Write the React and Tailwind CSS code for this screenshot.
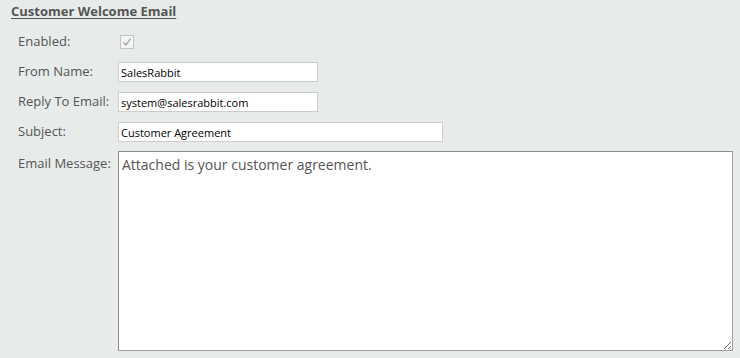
export default function App() {
  const labelCls = "w-[100px] shrink-0 text-[13px] text-[#555]";
  const inputCls =
    "h-[20px] border border-[#ccc] bg-white px-[2px] text-[11px] text-black outline-none";

  return (
    <div
      className="w-[740px] h-[358px] bg-[#e7ecea] overflow-hidden"
      style={{ fontFamily: '"Open Sans", sans-serif' }}
    >
      <div className="pl-[11px] h-[20px] leading-[20px]">
        <span className="text-[13px] font-bold text-[#555] underline underline-offset-[2px]">
          Customer Welcome Email
        </span>
      </div>

      <div className="pl-[18px] mt-[12px] flex flex-col gap-[10px]">
        <div className="flex items-center h-[20px]">
          <div className={labelCls}>Enabled:</div>
          <div className="ml-[2px] w-[14px] h-[14px] border border-[#c4c4c4] bg-[#f4f4f4] flex items-center justify-center">
            <svg width="10" height="10" viewBox="0 0 10 10">
              <path d="M1.5 5.5 L4 8 L8.5 1.5" fill="none" stroke="#9a9a9a" strokeWidth="1.2" />
            </svg>
          </div>
        </div>

        <div className="flex items-center h-[20px]">
          <div className={labelCls}>From Name:</div>
          <input className={`${inputCls} w-[200px]`} defaultValue="SalesRabbit" />
        </div>

        <div className="flex items-center h-[20px]">
          <div className={labelCls}>Reply To Email:</div>
          <input className={`${inputCls} w-[200px]`} defaultValue="system@salesrabbit.com" />
        </div>

        <div className="flex items-center h-[20px]">
          <div className={labelCls}>Subject:</div>
          <input className={`${inputCls} w-[325px]`} defaultValue="Customer Agreement" />
        </div>

        <div className="flex items-start -mt-[1px]">
          <div className={`${labelCls} pt-[3px]`}>Email Message:</div>
          <textarea
            className="w-[615px] h-[200px] border border-[#8f8f8f] border-b-[#a0a0a0] border-r-[#a0a0a0] bg-white px-[3px] pt-[2px] text-[14px] text-[#555] outline-none resize"
            defaultValue="Attached is your customer agreement."
          />
        </div>
      </div>
    </div>
  );
}
